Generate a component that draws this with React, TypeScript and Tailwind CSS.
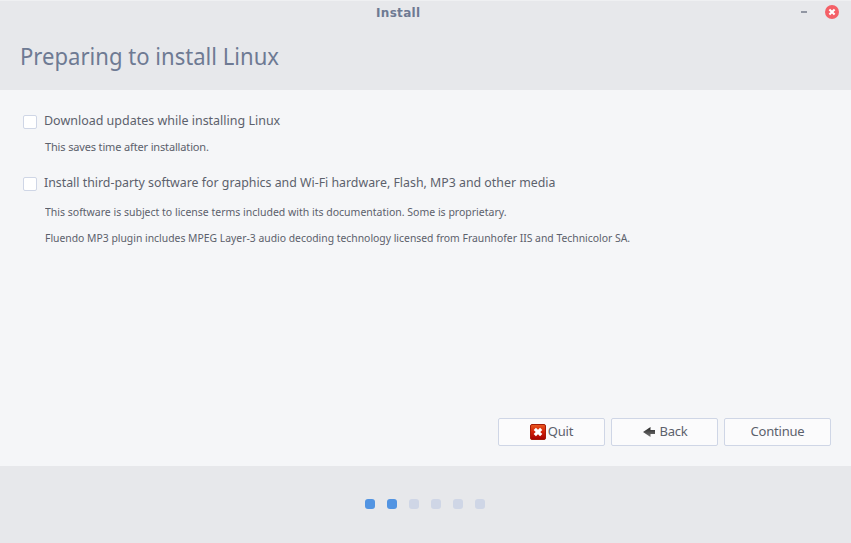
import type { ReactNode } from "react";

function Option({ label, className }: { label: string; className: string }) {
  return (
    <label className="flex h-5 items-center gap-[7px] whitespace-nowrap text-[13px] leading-5">
      <span className="mt-[2px] h-[14px] w-[14px] shrink-0 rounded-[2px] border border-[#cfd6e6] bg-white" />
      <span className={className}>{label}</span>
    </label>
  );
}

function Button({ children }: { children: ReactNode }) {
  return (
    <button className="flex h-7 w-[107px] items-center justify-center rounded-[2px] border border-[#cfd6e6] bg-[#fbfbfc] pb-[2px] text-[13px] leading-5 tracking-[-0.2px]">
      {children}
    </button>
  );
}

export default function App() {
  return (
    <div className="flex h-[543px] w-[851px] flex-col bg-[#f5f6f8] font-['Noto_Sans',sans-serif] text-[#5c616c]">
      <header className="h-[90px] border-t border-[#eff0f2] bg-[#e7e8eb] text-[#6e7a93]">
        <div className="flex h-6 items-center justify-between pl-[376px] pr-3">
          <span className="font-['DejaVu_Sans',sans-serif] text-[12px] font-bold leading-4 tracking-[0.32px]">Install</span>
          <div className="flex items-center gap-[18px]">
            <span className="-mt-[2px] h-[2px] w-[6px] bg-[#9297a3]" />
            <svg width="14" height="14" viewBox="0 0 14 14" className="-mt-[2px]">
              <circle cx="7" cy="7" r="7" fill="#f46067" />
              <path d="M4.4 4.4l5.2 5.2M9.6 4.4L4.4 9.6" stroke="#fff" strokeWidth="2.1" />
            </svg>
          </div>
        </div>
        <h1 className="ml-5 w-max origin-left scale-x-[0.92] whitespace-nowrap text-[24px] leading-[62px]">Preparing to install Linux</h1>
      </header>
      <main className="flex h-[376px] flex-col pb-5 pl-[23px] pr-5 pt-[21px]">
        <Option label="Download updates while installing Linux" className="-mt-[2px] origin-left scale-x-[0.96]" />
        <p className="mt-2 pl-[22px] text-[11px] leading-4 tracking-[-0.15px]">This saves time after installation.</p>
        <div className="mt-[18px]">
          <Option
            label="Install third-party software for graphics and Wi-Fi hardware, Flash, MP3 and other media"
            className="-mt-[2px] origin-left scale-x-[0.95]"
          />
        </div>
        <p className="ml-[22px] mt-[11px] w-max origin-left scale-x-[0.954] whitespace-nowrap text-[11px] leading-4">
          This software is subject to license terms included with its documentation. Some is proprietary.
        </p>
        <p className="ml-[22px] mt-[10px] w-max origin-left scale-x-[0.943] whitespace-nowrap text-[11px] leading-4">
          Fluendo MP3 plugin includes MPEG Layer-3 audio decoding technology licensed from Fraunhofer IIS and Technicolor SA.
        </p>
        <div className="mt-auto flex justify-end gap-[6px]">
          <Button>
            <svg width="16" height="16" viewBox="0 0 16 16" className="mr-[2px] mt-[2px]">
              <defs>
                <linearGradient id="quit" x2="0" y2="1">
                  <stop stopColor="#e85a20" />
                  <stop offset=".45" stopColor="#d52408" />
                  <stop offset="1" stopColor="#a40000" />
                </linearGradient>
              </defs>
              <rect x=".5" y=".5" width="15" height="15" rx="1.5" fill="url(#quit)" stroke="#a51b08" />
              <path d="M4.8 4.8l6.4 6.4M11.2 4.8l-6.4 6.4" stroke="#fff" strokeWidth="3.2" />
            </svg>
            Quit
          </Button>
          <Button>
            <svg width="12" height="10" viewBox="0 0 12 10" className="ml-[2px] mr-1 mt-[2px]">
              <defs>
                <linearGradient id="back" x2="0" y2="1">
                  <stop stopColor="#252525" />
                  <stop offset="1" stopColor="#777" />
                </linearGradient>
              </defs>
              <path d="M0 5L7.5 0v3H12v4H7.5v3z" fill="url(#back)" />
            </svg>
            Back
          </Button>
          <Button>Continue</Button>
        </div>
      </main>
      <footer className="flex h-[77px] items-center justify-center gap-3 bg-[#e7e8eb] pb-[2px] pr-px">
        <span className="h-[10px] w-[10px] rounded-[3px] bg-[#5294e2]" />
        <span className="h-[10px] w-[10px] rounded-[3px] bg-[#5294e2]" />
        <span className="h-[10px] w-[10px] rounded-[3px] bg-[#cfd6e6]" />
        <span className="h-[10px] w-[10px] rounded-[3px] bg-[#cfd6e6]" />
        <span className="h-[10px] w-[10px] rounded-[3px] bg-[#cfd6e6]" />
        <span className="h-[10px] w-[10px] rounded-[3px] bg-[#cfd6e6]" />
      </footer>
    </div>
  );
}
